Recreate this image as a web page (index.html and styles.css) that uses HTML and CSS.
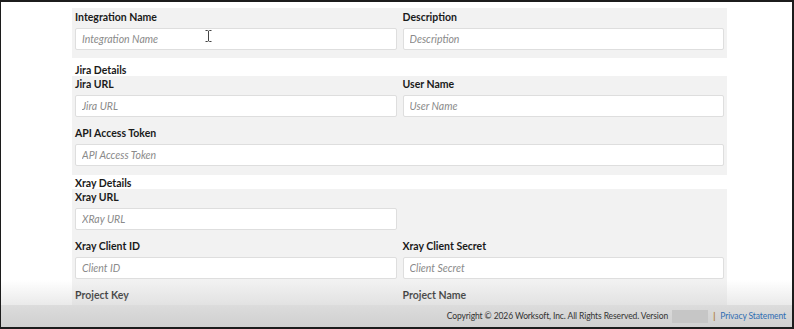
FILE: index.html
```html
<!DOCTYPE html>
<html lang="en">
<head>
<meta charset="utf-8">
<title>Integration</title>
<link rel="stylesheet" href="styles.css">
</head>
<body>
<div class="frame">
  <main class="form">
    <section class="panel panel-first">
      <div class="grid">
        <div class="field">
          <label class="label">Integration Name</label>
          <input class="input" placeholder="Integration Name">
        </div>
        <div class="field">
          <label class="label">Description</label>
          <input class="input" placeholder="Description">
        </div>
      </div>
    </section>

    <h3 class="heading heading-jira">Jira Details</h3>
    <section class="panel">
      <div class="grid">
        <div class="field">
          <label class="label">Jira URL</label>
          <input class="input" placeholder="Jira URL">
        </div>
        <div class="field">
          <label class="label">User Name</label>
          <input class="input" placeholder="User Name">
        </div>
        <div class="field span2">
          <label class="label">API Access Token</label>
          <input class="input" placeholder="API Access Token">
        </div>
      </div>
    </section>

    <h3 class="heading heading-xray">Xray Details</h3>
    <section class="panel">
      <div class="grid">
        <div class="field">
          <label class="label">Xray URL</label>
          <input class="input" placeholder="XRay URL">
        </div>
        <div class="field"></div>
        <div class="field">
          <label class="label">Xray Client ID</label>
          <input class="input" placeholder="Client ID">
        </div>
        <div class="field">
          <label class="label">Xray Client Secret</label>
          <input class="input" placeholder="Client Secret">
        </div>
        <div class="field">
          <label class="label">Project Key</label>
          <input class="input" placeholder="Project Key">
        </div>
        <div class="field">
          <label class="label">Project Name</label>
          <input class="input" placeholder="Project Name">
        </div>
      </div>
    </section>
  </main>

  <svg class="cursor" width="7" height="12" viewBox="0 0 7 12" aria-hidden="true">
    <path d="M0.5 0.5 H2.5 M4.5 0.5 H6.5 M3.5 1 V11 M0.5 11.5 H2.5 M4.5 11.5 H6.5 M2.5 0.5 L3.5 1.2 L4.5 0.5 M2.5 11.5 L3.5 10.8 L4.5 11.5" stroke="#444" stroke-width="1" fill="none"/>
  </svg>

  <footer class="footer">
    <div class="footer-bar">
      <span class="copy">Copyright © 2026 Worksoft, Inc. All Rights Reserved. Version</span>
      <span class="version"></span>
      <span class="sep">|</span>
      <a class="privacy" href="#">Privacy Statement</a>
    </div>
  </footer>
</div>
</body>
</html>
```

FILE: styles.css
```css
* { box-sizing: border-box; }
html, body {
  margin: 0;
  padding: 0;
  height: 329px;
  overflow: hidden;
  background: #1c1c1c;
}
.frame {
  position: relative;
  height: 329px;
  border-style: solid;
  border-color: #1c1c1c;
  border-width: 2px 2px 2px 1px;
  background: #fff;
  overflow: hidden;
  font-family: Lato, "Open Sans", sans-serif;
}
.form {
  width: 655px;
  margin-left: 71px;
  padding-top: 6px;
}
.panel {
  background: #f2f2f2;
  padding: 1px 3px 9px 3px;
}
.panel-first {
  padding-top: 2px;
  padding-bottom: 8px;
}
.grid {
  display: grid;
  grid-template-columns: 1fr 1fr;
  column-gap: 6px;
  row-gap: 9px;
}
.span2 { grid-column: 1 / 3; }
.field {
  display: flex;
  flex-direction: column;
}
.label {
  font-size: 10.5px;
  font-weight: 700;
  line-height: 14px;
  color: #1a1a1a;
  margin-bottom: 4px;
}
.input {
  height: 22px;
  border: 1px solid #dedede;
  border-radius: 2px;
  background: #fff;
  padding: 0 6px;
  font-family: inherit;
  font-size: 10.5px;
  outline: none;
}
.input::placeholder {
  color: #8a8a8a;
  font-style: italic;
}
.heading {
  margin: 0;
  font-size: 10.5px;
  font-weight: 700;
  line-height: 12px;
  color: #1a1a1a;
  padding-left: 3px;
}
.heading-jira { margin-top: 6px; }
.heading-xray { margin-top: 2px; }
.cursor {
  position: absolute;
  left: 204px;
  top: 28px;
}
.footer {
  position: absolute;
  left: 0;
  right: 0;
  bottom: 0;
  height: 47px;
  background: linear-gradient(to bottom, rgba(205,205,205,0) 0%, rgba(205,205,205,0.4) 50%, rgba(205,205,205,0.7) 100%);
  display: flex;
  flex-direction: column;
  justify-content: flex-end;
}
.footer-bar {
  height: 22px;
  display: flex;
  justify-content: flex-end;
  align-items: center;
  gap: 4px;
  padding-right: 6px;
  font-size: 8.5px;
  letter-spacing: -0.1px;
  color: #333;
  background: linear-gradient(to bottom, #dcdcdc, #d0d0d0);
}
.version {
  display: inline-block;
  width: 36px;
  height: 13px;
  background: #c6c6c6;
}
.sep {
  color: #b07a2a;
  font-weight: 700;
  margin: 0 1px;
}
.privacy {
  color: #2f6db3;
  text-decoration: none;
}
```
